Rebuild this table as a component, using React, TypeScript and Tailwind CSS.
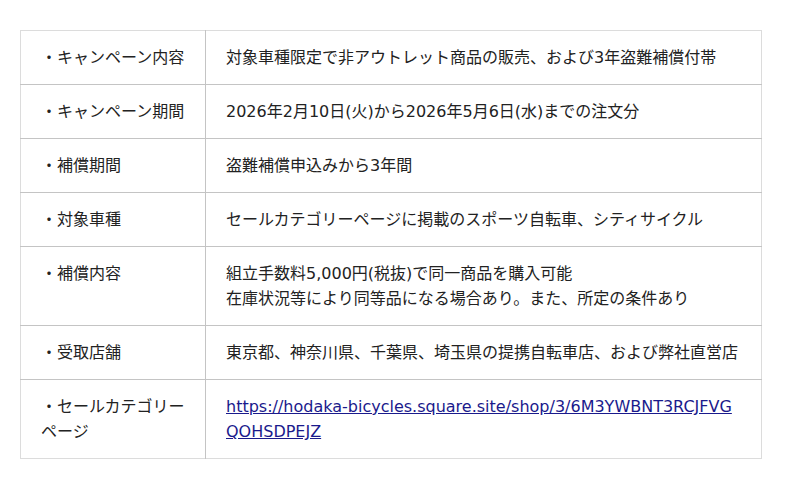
const rows: { label: string; lines: string[]; link?: boolean }[] = [
  { label: '・キャンペーン内容', lines: ['対象車種限定で非アウトレット商品の販売、および3年盗難補償付帯'] },
  { label: '・キャンペーン期間', lines: ['2026年2月10日(火)から2026年5月6日(水)までの注文分'] },
  { label: '・補償期間', lines: ['盗難補償申込みから3年間'] },
  { label: '・対象車種', lines: ['セールカテゴリーページに掲載のスポーツ自転車、シティサイクル'] },
  {
    label: '・補償内容',
    lines: ['組立手数料5,000円(税抜)で同一商品を購入可能', '在庫状況等により同等品になる場合あり。また、所定の条件あり'],
  },
  { label: '・受取店舗', lines: ['東京都、神奈川県、千葉県、埼玉県の提携自転車店、および弊社直営店'] },
  {
    label: '・セールカテゴリーページ',
    lines: ['https://hodaka-bicycles.square.site/shop/3/6M3YWBNT3RCJFVGQOHSDPEJZ'],
    link: true,
  },
];

export default function App() {
  return (
    <div className="min-h-screen bg-white pt-[30px] px-[20px] font-['DejaVu_Sans','Noto_Sans_CJK_JP',sans-serif] text-[16px] leading-[25px] text-[#222]">
      <table className="w-[742px] border-collapse border border-[#dcdcdc]">
        <tbody>
          {rows.map((r) => (
            <tr key={r.label} className="border-b border-[#c4c4c4] last:border-[#dcdcdc]">
              <td className="w-[185px] align-top border-r border-[#c4c4c4] pl-[20px] pr-[20px] py-[14px]">
                {r.label}
              </td>
              <td className="align-top px-[20px] py-[14px]">
                {r.link ? (
                  <a href="#" className="text-[#1a1a8c] underline break-all">
                    {r.lines[0]}
                  </a>
                ) : (
                  r.lines.map((l) => <div key={l}>{l}</div>)
                )}
              </td>
            </tr>
          ))}
        </tbody>
      </table>
    </div>
  );
}
